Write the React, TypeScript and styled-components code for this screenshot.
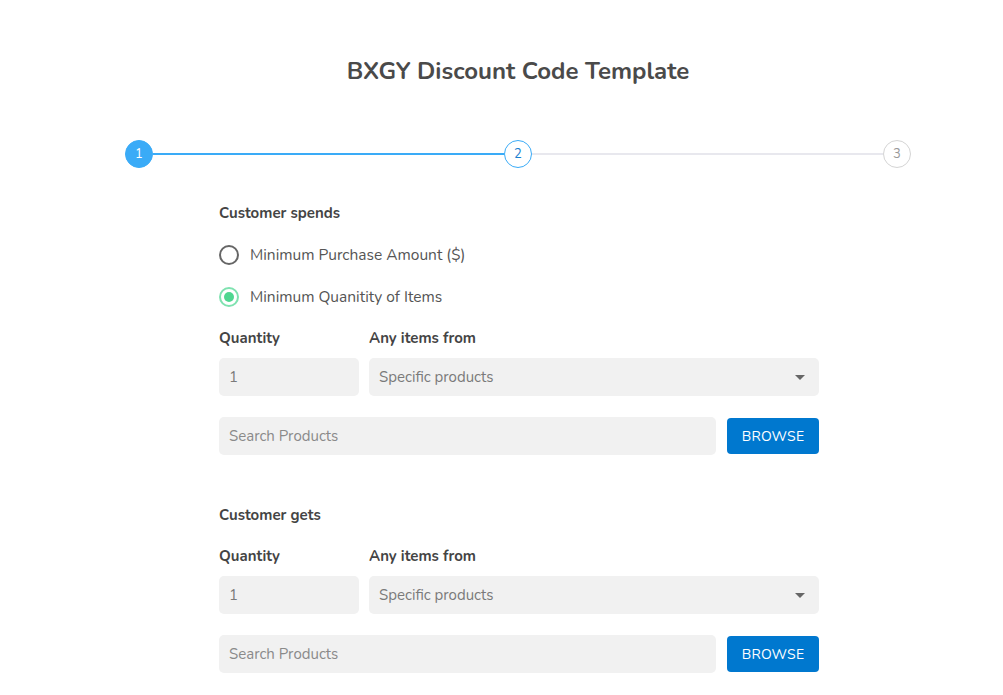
import React from "react";
import styled, { createGlobalStyle } from "styled-components";

const Global = createGlobalStyle`
  body { margin: 0; background: #fff; font-family: "Nunito", "Lato", "Open Sans", sans-serif; color: #444; }
  * { box-sizing: border-box; }
`;

const Page = styled.div`
  display: flex;
  flex-direction: column;
  align-items: center;
  padding: 56px 0 40px 33px;
`;

const Title = styled.h1`
  margin: 0;
  font-size: 24px;
  line-height: 30px;
  font-weight: 700;
  color: #4a4a4a;
`;

const Stepper = styled.div`
  margin-top: 54px;
  width: 786px;
  display: flex;
  align-items: center;
`;

const Step = styled.div<{ $state: "done" | "active" | "todo" }>`
  width: 28px;
  height: 28px;
  flex: none;
  border-radius: 50%;
  display: flex;
  align-items: center;
  justify-content: center;
  font-size: 13px;
  background: ${(p) => (p.$state === "done" ? "#3aabf7" : "#fff")};
  color: ${(p) => (p.$state === "done" ? "#fff" : p.$state === "active" ? "#1a7fd0" : "#999")};
  border: 1px solid ${(p) => (p.$state === "todo" ? "#d4d4d4" : "#3aabf7")};
`;

const Line = styled.div<{ $done?: boolean }>`
  flex: 1;
  height: 2px;
  background: ${(p) => (p.$done ? "#3aabf7" : "#e8e8ee")};
`;

const Form = styled.div`
  width: 600px;
  margin-top: 35px;
  margin-left: 2px;
  display: flex;
  flex-direction: column;
`;

const SectionTitle = styled.div<{ $top?: number }>`
  font-size: 15px;
  line-height: 20px;
  font-weight: 700;
  color: #444;
  margin-top: ${(p) => p.$top ?? 0}px;
`;

const RadioRow = styled.label<{ $top: number }>`
  display: flex;
  align-items: center;
  gap: 11px;
  margin-top: ${(p) => p.$top}px;
  font-size: 15.5px;
  line-height: 20px;
  color: #555;
`;

const RadioCircle = styled.span<{ $checked?: boolean }>`
  width: 20px;
  height: 20px;
  flex: none;
  border-radius: 50%;
  border: 2px solid ${(p) => (p.$checked ? "#7fe2b0" : "#666")};
  display: flex;
  align-items: center;
  justify-content: center;
  &::after {
    content: "";
    width: 10px;
    height: 10px;
    border-radius: 50%;
    background: ${(p) => (p.$checked ? "#4fd690" : "transparent")};
  }
`;

const Grid = styled.div<{ $top: number }>`
  display: grid;
  grid-template-columns: 140px 1fr;
  column-gap: 10px;
  row-gap: 10px;
  margin-top: ${(p) => p.$top}px;
`;

const FieldLabel = styled.div`
  font-size: 15px;
  line-height: 20px;
  font-weight: 700;
  color: #444;
`;

const Field = styled.div`
  height: 38px;
  border-radius: 5px;
  background: #f1f1f1;
  display: flex;
  align-items: center;
  padding: 0 10px;
  font-size: 15px;
  color: #7a7a7a;
`;

const SelectField = styled(Field)`
  justify-content: space-between;
  padding-right: 14px;
`;

const Caret = styled.span`
  width: 0;
  height: 0;
  border-left: 5px solid transparent;
  border-right: 5px solid transparent;
  border-top: 5px solid #666;
`;

const SearchRow = styled.div`
  display: flex;
  align-items: center;
  gap: 11px;
  margin-top: 21px;
`;

const Search = styled(Field)`
  flex: 1;
  color: #8a8a8a;
`;

const Browse = styled.button`
  width: 92px;
  height: 36px;
  border: none;
  border-radius: 4px;
  background: #0078cf;
  color: #fff;
  font-family: inherit;
  font-size: 14px;
  letter-spacing: 0.2px;
`;

function ProductBlock({ top }: { top: number }) {
  return (
    <>
      <Grid $top={top}>
        <FieldLabel>Quantity</FieldLabel>
        <FieldLabel>Any items from</FieldLabel>
        <Field>1</Field>
        <SelectField>
          Specific products
          <Caret />
        </SelectField>
      </Grid>
      <SearchRow>
        <Search>Search Products</Search>
        <Browse>BROWSE</Browse>
      </SearchRow>
    </>
  );
}

export default function App() {
  return (
    <>
      <Global />
      <Page>
        <Title>BXGY Discount Code Template</Title>
        <Stepper>
          <Step $state="done">1</Step>
          <Line $done />
          <Step $state="active">2</Step>
          <Line />
          <Step $state="todo">3</Step>
        </Stepper>
        <Form>
          <SectionTitle>Customer spends</SectionTitle>
          <RadioRow $top={22}>
            <RadioCircle />
            Minimum Purchase Amount ($)
          </RadioRow>
          <RadioRow $top={22}>
            <RadioCircle $checked />
            Minimum Quanitity of Items
          </RadioRow>
          <ProductBlock top={21} />
          <SectionTitle $top={50}>Customer gets</SectionTitle>
          <ProductBlock top={21} />
        </Form>
      </Page>
    </>
  );
}
